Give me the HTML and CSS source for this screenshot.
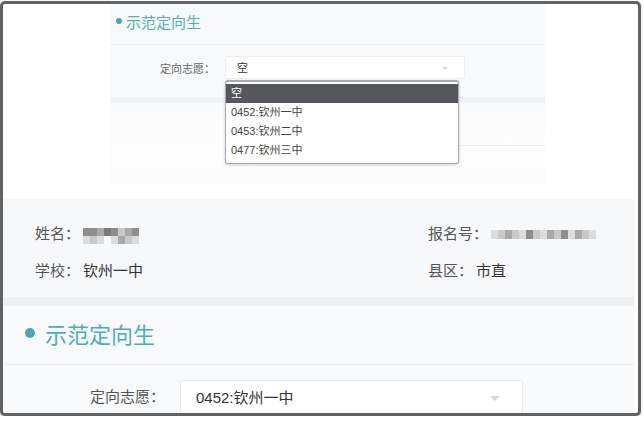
FILE: index.html
```html
<!DOCTYPE html>
<html lang="zh-CN">
<head>
    <meta charset="UTF-8" />
    <title>示范定向生</title>
    <link rel="stylesheet" href="styles.css">
</head>
<body>
    <div class="frame">
        <div class="shot">
            <div class="shot-title"><span class="dot"></span>示范定向生</div>
            <div class="shot-row">
                <span class="shot-label">定向志愿：</span>
                <div class="shot-select">空<span class="caret small"></span></div>
            </div>
            <div class="shot-band"></div>
            <div class="shot-line"></div>
            <ul class="dropdown">
                <li class="active">空</li>
                <li>0452:钦州一中</li>
                <li>0453:钦州二中</li>
                <li>0477:钦州三中</li>
            </ul>
        </div>

        <div class="info">
            <div class="info-item">姓名：<span class="blur name">
                <i class="g3"></i><i class="g3"></i><i class="g2"></i><i class="g4"></i><i class="g3"></i><i class="g1"></i><i class="g2"></i><i class="g3"></i>
                <br><i class="g5"></i><i class="g1"></i><i class="g5"></i><i class="g0"></i><i class="g5"></i><i class="g2"></i><i class="g1"></i><i class="g5"></i>
            </span></div>
            <div class="info-item">报名号：<span class="blur num">
                <i class="g5"></i><i class="g1"></i><i class="g2"></i><i class="g1"></i><i class="g5"></i><i class="g3"></i><i class="g1"></i><i class="g5"></i><i class="g2"></i><i class="g1"></i><i class="g3"></i><i class="g5"></i><i class="g2"></i><i class="g1"></i><i class="g5"></i>
            </span></div>
            <div class="info-item">学校：<b>钦州一中</b></div>
            <div class="info-item">县区：<b>市直</b></div>
        </div>
        <div class="band"></div>

        <div class="section">
            <div class="section-title"><span class="dot"></span>示范定向生</div>
            <div class="form-row">
                <span class="form-label">定向志愿：</span>
                <div class="select">0452:钦州一中<span class="caret"></span></div>
            </div>
        </div>
    </div>
</body>
</html>
```

FILE: styles.css
```css
body {
    margin: 0;
    background: #ffffff;
    font-family: "Liberation Sans", "Noto Sans CJK SC", sans-serif;
    color: #555;
}

.frame {
    box-sizing: border-box;
    width: 641px;
    height: 415px;
    margin-top: 1px;
    border: 3px solid #626262;
    border-radius: 5px;
    overflow: hidden;
    background: #fff;
    box-shadow: 0 1px 2px rgba(0,0,0,0.25);
}

/* the small screenshot on top */
.shot {
    position: relative;
    width: 435px;
    height: 180px;
    margin-left: 107px;
    background: linear-gradient(#f8f9fb, #f8f9fb 95px, #fcfcfd 110px, #fdfdfe 160px, #fafbfc);
}

.shot-title {
    display: flex;
    align-items: center;
    height: 18px;
    padding: 8px 0 14px 6px;
    font-size: 15px;
    color: #4fb0be;
    border-bottom: 1px solid #eceef1;
}

.shot-title .dot {
    width: 6px;
    height: 6px;
    margin-right: 4px;
}

.dot {
    display: inline-block;
    border-radius: 50%;
    background: #4aa7b6;
}

.shot-row {
    display: flex;
    align-items: center;
    margin-top: 11px;
}

.shot-label {
    width: 105px;
    text-align: right;
    font-size: 11px;
    color: #666;
}

.shot-select {
    position: relative;
    box-sizing: border-box;
    width: 240px;
    height: 23px;
    margin-left: 10px;
    padding-left: 11px;
    line-height: 22px;
    font-size: 11px;
    color: #333;
    background: #fff;
    border: 1px solid #eeeff1;
    border-radius: 2px;
}

.caret {
    position: absolute;
    right: 22px;
    top: 15px;
    width: 0;
    height: 0;
    border-left: 5px solid transparent;
    border-right: 5px solid transparent;
    border-top: 5px solid #d4d6d9;
}

.caret.small {
    right: 16px;
    top: 10px;
    border-left-width: 3px;
    border-right-width: 3px;
    border-top-width: 3px;
}

.shot-band {
    height: 6px;
    margin-top: 18px;
    background: #f2f3f5;
}

.shot-line {
    height: 1px;
    margin: 42px 0 0 115px;
    background: #edeff1;
}

.dropdown {
    position: absolute;
    left: 115px;
    top: 76px;
    box-sizing: border-box;
    width: 234px;
    margin: 0;
    padding: 2px 0 3px;
    list-style: none;
    background: #fff;
    border: 1px solid #a9abae;
    border-top-width: 2px;
    border-radius: 3px;
    box-shadow: 0 1px 3px rgba(0,0,0,0.2);
}

.dropdown li {
    height: 19px;
    line-height: 19px;
    padding-left: 5px;
    font-size: 11px;
    color: #444;
}

.dropdown li.active {
    background: #55575d;
    color: #fff;
}

/* student info */
.info {
    display: grid;
    grid-template-columns: 393px 1fr;
    align-content: start;
    row-gap: 17px;
    height: 98px;
    box-sizing: border-box;
    margin: 15px 4px 0 0;
    padding: 25px 0 0 32px;
    background: #f7f8fa;
    font-size: 15px;
}

.info-item {
    display: flex;
    align-items: center;
    height: 20px;
    line-height: 20px;
    white-space: nowrap;
}

.info-item b {
    font-weight: normal;
    color: #333;
    margin-left: 3px;
}

.blur {
    display: inline-block;
    margin-left: 3px;
    line-height: 0;
    font-size: 0;
}

.blur i {
    display: inline-block;
    width: 7px;
    height: 7px;
}

.blur.name {
    margin-top: 4px;
}

.blur.name i {
    height: 8px;
}

.blur.num i {
    height: 9px;
}

.g0 { background: #fafafa; }
.g1 { background: #c9c9c9; }
.g2 { background: #a9a9a9; }
.g3 { background: #8e8e8e; }
.g4 { background: #7a7a7a; }
.g5 { background: #dcdcdc; }

.band {
    height: 9px;
    margin-right: 4px;
    background: #eff0f2;
}

/* lower section */
.section {
    height: 120px;
    margin-right: 4px;
    background: #f9fafc;
}

.section-title {
    display: flex;
    align-items: center;
    height: 30px;
    padding: 12px 0 16px 20px;
    margin-left: 2px;
    font-size: 22px;
    color: #4aaebd;
    border-bottom: 1px solid #eaedf0;
}

.section-title .dot {
    width: 10px;
    height: 10px;
    margin-right: 10px;
}

.form-row {
    display: flex;
    align-items: flex-start;
    margin-top: 15px;
}

.form-label {
    width: 162px;
    text-align: right;
    font-size: 15px;
    line-height: 34px;
    color: #555;
}

.select {
    position: relative;
    box-sizing: border-box;
    width: 343px;
    height: 38px;
    margin-left: 15px;
    padding-left: 15px;
    line-height: 34px;
    font-size: 15px;
    color: #333;
    background: #fff;
    border: 1px solid #e8eaed;
    border-radius: 3px;
}
```
